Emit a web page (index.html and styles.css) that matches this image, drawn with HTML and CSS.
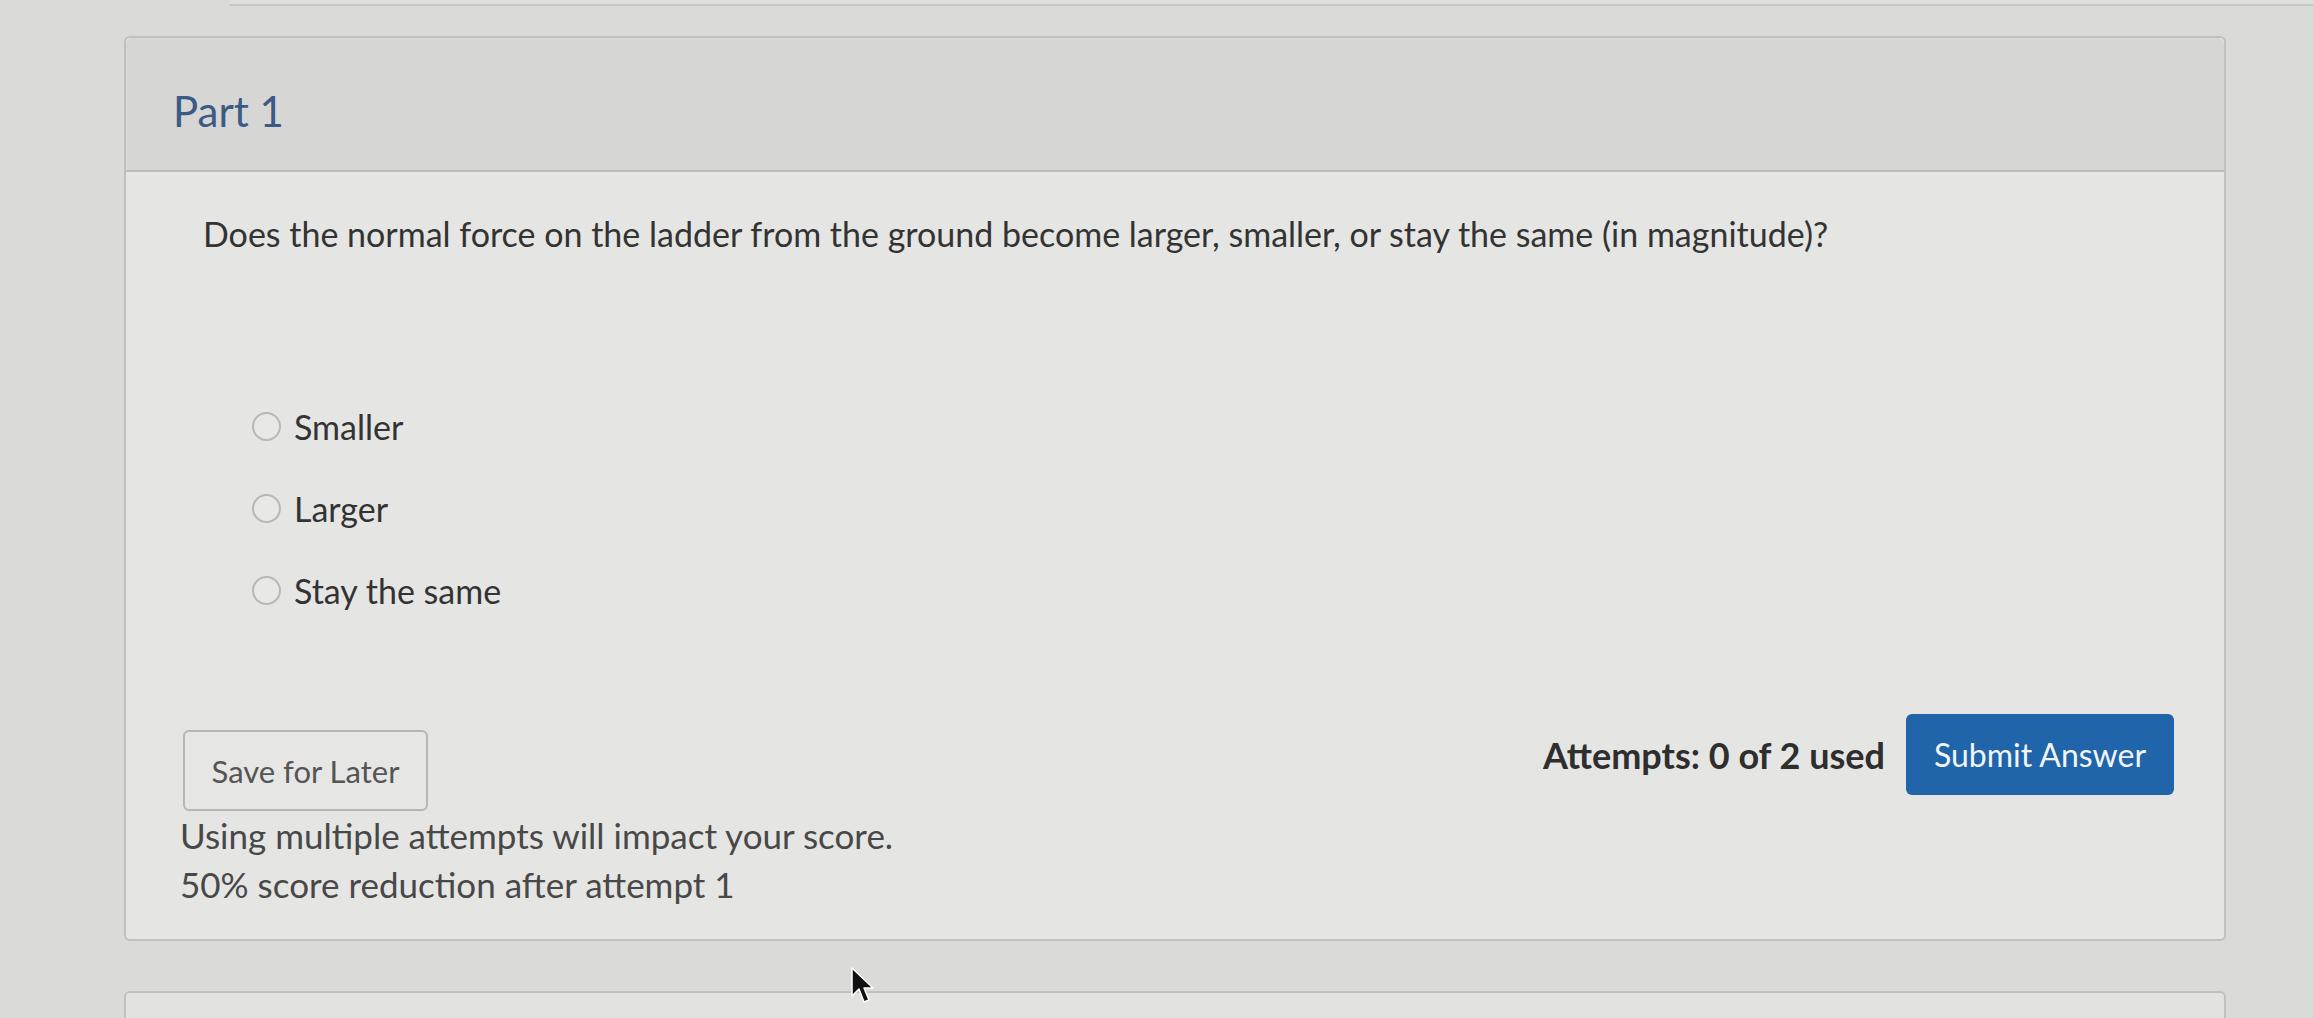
FILE: index.html
```html
<!DOCTYPE html>
<html lang="en">
<head>
<meta charset="utf-8">
<title>Part 1</title>
<link rel="stylesheet" href="styles.css">
</head>
<body>
<div class="prev-edge"></div>
<section class="card">
  <header class="card-header">Part 1</header>
  <div class="card-body">
    <p class="question">Does the normal force on the ladder from the ground become larger, smaller, or stay the same (in magnitude)?</p>
    <ul class="options">
      <li class="option"><span class="radio"></span><span class="label">Smaller</span></li>
      <li class="option"><span class="radio"></span><span class="label">Larger</span></li>
      <li class="option"><span class="radio"></span><span class="label">Stay the same</span></li>
    </ul>
    <div class="actions">
      <div class="left-col">
        <button class="btn-save">Save for Later</button>
        <p class="note">Using multiple attempts will impact your score.</p>
        <p class="note">50% score reduction after attempt 1</p>
      </div>
      <div class="right-col">
        <span class="attempts">Attempts: 0 of 2 used</span>
        <button class="btn-submit">Submit Answer</button>
      </div>
    </div>
  </div>
</section>
<section class="card next-card"></section>
<svg class="cursor" width="26" height="40" viewBox="0 0 26 40" aria-hidden="true">
  <path d="M2 2 L2 30 L9 23 L14 36 L19 34 L14 22 L23 22 Z" fill="#111" stroke="#fff" stroke-width="1.5" stroke-linejoin="round"/>
</svg>
</body>
</html>
```
FILE: styles.css
```css
* { box-sizing: border-box; }
html, body { margin: 0; padding: 0; }
body {
  background: #dadad8;
  font-family: Lato, "Open Sans", "Liberation Sans", sans-serif;
  color: #343434;
  height: 1018px;
  overflow: hidden;
  position: relative;
}
.prev-edge {
  height: 6px;
  margin-left: 230px;
  border-bottom: 2px solid #c6c6c4;
  background: #dededc;
}
.card {
  margin: 30px 0 0 124px;
  width: 2102px;
  background: #e5e5e3;
  border: 2px solid #c0c0be;
  border-radius: 6px;
}
.card-header {
  height: 134px;
  background: #d6d6d4;
  border-bottom: 2px solid #bcbcba;
  border-radius: 6px 6px 0 0;
  display: flex;
  align-items: center;
  padding-left: 47px;
  padding-top: 14px;
  font-size: 42px;
  color: #3b5a85;
}
.card-body {
  padding: 42px 50px 30px 57px;
}
.question {
  margin: 0;
  padding-left: 20px;
  font-size: 34px;
  line-height: 40px;
  color: #333;
}
.options {
  list-style: none;
  margin: 131px 0 0 0;
  padding: 0 0 0 69px;
}
.option {
  display: flex;
  align-items: center;
  height: 82px;
  gap: 13px;
}
.radio {
  width: 29px;
  height: 29px;
  border-radius: 50%;
  border: 2px solid #b8b8b6;
  background: #e8e8e6;
  flex: none;
}
.label {
  font-size: 34px;
  color: #333;
}
.actions {
  margin-top: 83px;
  display: flex;
  justify-content: space-between;
  align-items: flex-start;
}
.left-col {
  padding-top: 16px;
}
.btn-save {
  display: block;
  width: 245px;
  height: 81px;
  border: 2px solid #b6b6b4;
  border-radius: 6px;
  background: #e6e6e4;
  font-family: inherit;
  font-size: 31px;
  color: #555;
  padding: 0;
}
.note {
  margin: 0 0 0 -3px;
  font-size: 35px;
  line-height: 49px;
  color: #484848;
}
.right-col {
  display: flex;
  align-items: center;
  gap: 21px;
}
.attempts {
  font-size: 36px;
  font-weight: 700;
  color: #2e2e2e;
}
.btn-submit {
  width: 268px;
  height: 81px;
  border: none;
  border-radius: 6px;
  background: #2064a9;
  color: #f2f5f8;
  font-family: inherit;
  font-size: 32px;
  padding: 0;
}
.next-card {
  margin-top: 50px;
  height: 200px;
  background: #e2e2e0;
}
.cursor {
  position: absolute;
  left: 850px;
  top: 966px;
}
```
